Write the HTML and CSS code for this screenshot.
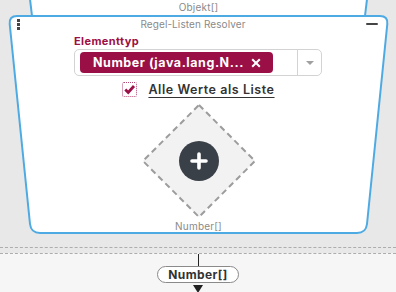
FILE: index.html
```html
<!DOCTYPE html>
<html lang="de">

<head>
    <meta charset="UTF-8">
    <meta name="viewport" content="width=device-width, initial-scale=1.0">
    <title>Regel-Listen Resolver</title>
    <link rel="stylesheet" href="styles.css">
</head>

<body>
    <div class="canvas">
        <div class="node node-top">
            <svg class="node-shape" width="345" height="50" viewBox="0 0 345 50">
                <path d="M0.25,-2 L6.5,50 L338.5,50 L344.75,-2" />
            </svg>
            <span class="node-out">Objekt[]</span>
        </div>

        <div class="node node-resolver">
            <svg class="node-shape" width="379" height="217" viewBox="0 0 379 217">
                <path d="M8,0 H371 Q379,0 378.3,8 L358,208 Q357,217 348,217 H31 Q22,217 21,208 L0.7,8 Q0,0 8,0 Z" />
            </svg>

            <div class="node-head">
                <span class="grip"><i></i><i></i><i></i></span>
                <span class="node-title">Regel-Listen Resolver</span>
                <span class="collapse"></span>
            </div>

            <div class="field">
                <label class="field-label">Elementtyp</label>
                <div class="select">
                    <div class="select-value">
                        <span class="chip">
                            <span class="chip-text">Number (java.lang.N...</span>
                            <svg class="chip-remove" width="10" height="10" viewBox="0 0 10 10">
                                <path d="M1.2,1.2 L8.8,8.8 M8.8,1.2 L1.2,8.8" />
                            </svg>
                        </span>
                    </div>
                    <div class="select-indicator"><span class="caret"></span></div>
                </div>
            </div>

            <label class="check-row">
                <span class="check">
                    <svg width="13" height="13" viewBox="0 0 13 13">
                        <path d="M2.3,6.6 L5.2,9.5 L11,3" />
                    </svg>
                </span>
                <span class="check-label">Alle Werte als Liste</span>
            </label>

            <div class="drop">
                <svg class="drop-diamond" width="116" height="116" viewBox="0 0 116 116">
                    <polygon points="58,2 114,58 58,114 2,58" />
                </svg>
                <button class="add">
                    <svg width="18" height="18" viewBox="0 0 18 18">
                        <path d="M9,2 V16 M2,9 H16" />
                    </svg>
                </button>
            </div>

            <div class="node-out">Number[]</div>
        </div>
    </div>

    <div class="gutter"></div>

    <div class="lane">
        <div class="link"></div>
        <div class="port">Number[]</div>
        <div class="arrow"></div>
    </div>
</body>

</html>
```

FILE: styles.css
```css
html {
    font-family: Inter, "Open Sans", sans-serif;
}

body {
    margin: 0;
    width: 396px;
    height: 292px;
    overflow: hidden;
    background: #f6f6f6;
}

.canvas {
    position: relative;
    height: 247px;
    background: #e8e8e8;
    border-bottom: 1px dashed #adadad;
}

.gutter {
    height: 5px;
    background: #e8e8e8;
}

/* nodes sit on the free canvas */
.node {
    position: absolute;
    z-index: 0;
    display: flex;
    flex-direction: column;
}

.node-shape {
    position: absolute;
    top: 0;
    left: 0;
    z-index: -1;
    overflow: visible;

    path {
        fill: #fff;
        stroke: #4eaae3;
        stroke-width: 2;
    }
}

.node-top {
    top: -30px;
    left: 26px;
    width: 345px;
    height: 46px;
    justify-content: flex-end;
    padding-bottom: 3px;
    box-sizing: border-box;
}

.node-out {
    font-size: 10px;
    line-height: 12px;
    color: #8a8a8a;
    text-align: center;
    letter-spacing: 0.2px;
}

.node-resolver {
    top: 16px;
    left: 9px;
    width: 379px;
    height: 217px;
}

.node-head {
    height: 16px;
    display: flex;
    align-items: center;
    padding: 0 10px 0 8px;
}

.grip {
    display: flex;
    flex-direction: column;
    gap: 1px;

    i {
        width: 3px;
        height: 3px;
        background: #454545;
    }
}

.node-title {
    flex: 1;
    text-align: center;
    font-size: 10px;
    color: #8a8a8a;
    letter-spacing: 0.1px;
}

.collapse {
    width: 12px;
    height: 2px;
    background: #444;
    border-radius: 1px;
}

.field {
    margin: 2px 0 0 65px;
    width: 248px;
    display: flex;
    flex-direction: column;
}

.field-label {
    font-size: 11px;
    line-height: 14px;
    font-weight: 700;
    color: #9b1046;
    letter-spacing: 0.4px;
    margin-bottom: 1px;
}

.select {
    display: flex;
    height: 27px;
    box-sizing: border-box;
    border: 1px solid #d3d3d3;
    border-radius: 5px;
    background: #fff;
}

.select-value {
    flex: 1;
    padding: 2px 5px;
    display: flex;
}

.chip {
    display: flex;
    align-items: center;
    gap: 7px;
    height: 21px;
    padding: 0 12px 0 13px;
    border-radius: 4px;
    background: #9b0f47;
    color: #fff;
    font-size: 12.5px;
    font-weight: 700;
    letter-spacing: 0.55px;
}

.chip-remove path {
    stroke: #fff;
    stroke-width: 2;
}

.select-indicator {
    width: 23px;
    border-left: 1px solid #d3d3d3;
    display: flex;
    justify-content: center;
    align-items: center;
}

.caret {
    border-left: 4px solid transparent;
    border-right: 4px solid transparent;
    border-top: 4px solid #a0a0a0;
}

.check-row {
    margin-top: 6px;
    height: 15px;
    display: flex;
    justify-content: center;
    align-items: center;
    gap: 11px;
}

.check {
    width: 15px;
    height: 15px;
    box-sizing: border-box;
    border: 1px dotted #b24a78;
    border-radius: 2px;
    display: flex;
    justify-content: center;
    align-items: center;

    path {
        fill: none;
        stroke: #9b1046;
        stroke-width: 2.8;
    }
}

.check-label {
    font-size: 12.5px;
    font-weight: 600;
    color: #333;
    letter-spacing: 0.55px;
    text-decoration: underline;
    text-underline-offset: 3px;
}

.drop {
    margin-top: 6px;
    height: 116px;
    display: grid;
    place-items: center;

    > * {
        grid-area: 1 / 1;
    }
}

.drop-diamond polygon {
    fill: #f2f2f2;
    stroke: #9c9c9c;
    stroke-width: 2;
    stroke-dasharray: 6 4;
}

.add {
    width: 40px;
    height: 40px;
    border: 0;
    padding: 0;
    border-radius: 50%;
    background: #3a4047;
    display: flex;
    justify-content: center;
    align-items: center;

    path {
        stroke: #fff;
        stroke-width: 3.6;
        stroke-linecap: round;
    }
}

.node-resolver .node-out {
    margin-top: 1px;
}

.lane {
    border-top: 1px dashed #adadad;
    display: flex;
    flex-direction: column;
    align-items: center;
}

.link {
    width: 1px;
    height: 12px;
    background: #222;
}

.port {
    height: 17px;
    box-sizing: border-box;
    padding: 0 10px;
    border: 1px solid #8a8a8a;
    border-radius: 9px;
    background: #fff;
    font-size: 12px;
    line-height: 15px;
    font-weight: 700;
    color: #333;
    letter-spacing: 0.4px;
}

.arrow {
    margin-top: 2px;
    border-left: 5px solid transparent;
    border-right: 5px solid transparent;
    border-top: 8px solid #222;
}
```
